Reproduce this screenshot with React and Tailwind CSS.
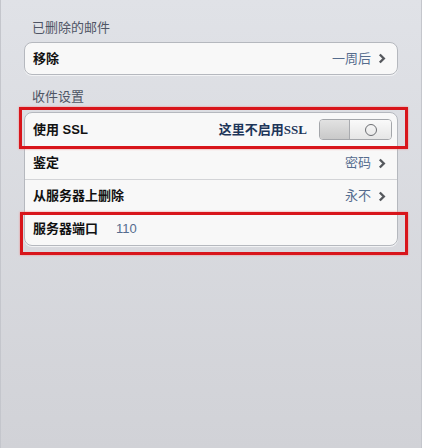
import React from "react";

const font = { fontFamily: '"Liberation Sans", "Noto Sans CJK SC", sans-serif' };

function Chevron() {
  return (
    <svg width="8" height="11" viewBox="0 0 8 11" className="ml-[7px]">
      <polyline points="1.8,1.5 5.8,5.5 1.8,9.5" fill="none" stroke="#55585d" strokeWidth="2.4" strokeLinejoin="miter" />
    </svg>
  );
}

function Row({ title, value, chevron, first, children, h = "h-[33px]" }) {
  return (
    <div className={`${h} flex items-center pl-[8px] pr-[11px] ${first ? "" : "border-t border-[#d3d4d7]"}`}>
      <span className="text-[13px] font-bold text-[#111]">{title}</span>
      {children}
      <div className="flex-1" />
      {value && <span className="text-[13px] text-[#556c8e]">{value}</span>}
      {chevron && <Chevron />}
    </div>
  );
}

export default function App() {
  return (
    <div
      className="relative w-[422px] h-[448px] overflow-hidden bg-gradient-to-b from-[#e0e2e7] to-[#d1d2d7] border-l border-r border-[#c4c6cc]"
      style={font}
    >
      <div className="px-[23px] pt-[20px]">
        <div className="h-[16px] leading-[16px] pl-[8px] text-[13px] text-[#4f5565]">已删除的邮件</div>
        <div className="mt-[6px] rounded-[8px] border border-[#b5b8be] bg-[#f8f8f8] shadow-[0_1px_0_#f2f3f5]">
          <Row title="移除" value="一周后" chevron first h="h-[31px]" />
        </div>
        <div className="mt-[14px] h-[16px] leading-[16px] pl-[8px] text-[13px] text-[#4f5565]">收件设置</div>
        <div className="mt-[7px] rounded-[8px] border border-[#b5b8be] bg-[#f8f8f8] shadow-[0_1px_0_#f2f3f5]">
          <div className="h-[33px] flex items-center pl-[8px] pr-[5px]">
            <span className="text-[13px] font-bold text-[#111]">使用 SSL</span>
            <div className="flex-1" />
            <span
              className="text-[13px] font-bold text-[#1d3559] mr-[12px]"
              style={{ fontFamily: '"Liberation Serif", "Noto Sans CJK SC", serif' }}
            >
              这里不启用SSL
            </span>
            <div className="flex h-[21px] w-[73px] rounded-[4px] border border-[#a4a6aa] overflow-hidden">
              <div className="w-[30px] bg-gradient-to-b from-[#e2e2e2] to-[#c9c9c9] border-r border-[#a9abaf]" />
              <div className="flex-1 flex items-center justify-center bg-gradient-to-b from-[#fafafa] to-[#e6e6e6]">
                <div className="w-[12px] h-[12px] rounded-full border-[1.5px] border-[#6c6e72]" />
              </div>
            </div>
          </div>
          <Row title="鉴定" value="密码" chevron />
          <Row title="从服务器上删除" value="永不" chevron />
          <Row title="服务器端口">
            <span className="ml-[18px] text-[13px] text-[#556c8e]">110</span>
          </Row>
        </div>
      </div>

      <div className="absolute left-[18px] top-[107px] w-[389px] h-[42px] border-[3px] border-[#d8151b] shadow-[0_0_2px_#f08a8a]" />
      <div className="absolute left-[19px] top-[212px] w-[388px] h-[43px] border-[3px] border-[#d8151b] shadow-[0_0_2px_#f08a8a]" />
    </div>
  );
}
